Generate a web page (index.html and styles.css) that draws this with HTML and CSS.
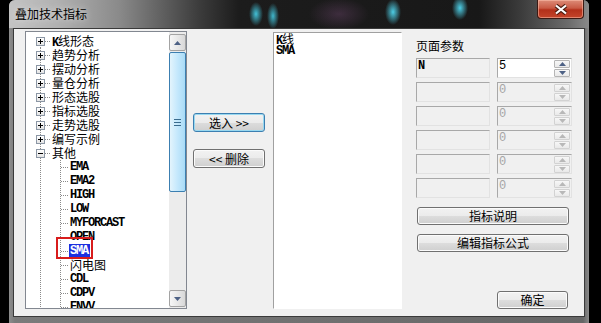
FILE: index.html
```html
<!DOCTYPE html>
<html lang="zh-CN">
<head>
    <meta charset="UTF-8">
    <title>叠加技术指标</title>
    <link rel="stylesheet" href="styles.css">
</head>
<body>
<div class="window">
    <div class="titlebar">
        <span class="title">叠加技术指标</span>
        <button class="close" type="button">
            <svg width="14" height="11" viewBox="0 0 14 11"><path d="M2 1.5 L12 9.5 M12 1.5 L2 9.5" stroke="#4a1c10" stroke-width="4.2"/><path d="M2 1.5 L12 9.5 M12 1.5 L2 9.5" stroke="#ffffff" stroke-width="2.2"/></svg>
        </button>
    </div>
    <div class="client">
        <div class="tree">
            <div class="tree-items">
                <div class="node root first"><span class="gutter"><i class="box plus"></i></span><span class="label"><span class="en">K</span>线形态</span></div>
                <div class="node root"><span class="gutter"><i class="box plus"></i></span><span class="label">趋势分析</span></div>
                <div class="node root"><span class="gutter"><i class="box plus"></i></span><span class="label">摆动分析</span></div>
                <div class="node root"><span class="gutter"><i class="box plus"></i></span><span class="label">量仓分析</span></div>
                <div class="node root"><span class="gutter"><i class="box plus"></i></span><span class="label">形态选股</span></div>
                <div class="node root"><span class="gutter"><i class="box plus"></i></span><span class="label">指标选股</span></div>
                <div class="node root"><span class="gutter"><i class="box plus"></i></span><span class="label">走势选股</span></div>
                <div class="node root"><span class="gutter"><i class="box plus"></i></span><span class="label">编写示例</span></div>
                <div class="node root"><span class="gutter"><i class="box minus"></i></span><span class="label">其他</span></div>
                <div class="node child"><span class="gutter"></span><span class="gutter2"></span><span class="label en">EMA</span></div>
                <div class="node child"><span class="gutter"></span><span class="gutter2"></span><span class="label en">EMA2</span></div>
                <div class="node child"><span class="gutter"></span><span class="gutter2"></span><span class="label en">HIGH</span></div>
                <div class="node child"><span class="gutter"></span><span class="gutter2"></span><span class="label en">LOW</span></div>
                <div class="node child"><span class="gutter"></span><span class="gutter2"></span><span class="label en">MYFORCAST</span></div>
                <div class="node child"><span class="gutter"></span><span class="gutter2"></span><span class="label en">OPEN</span></div>
                <div class="node child"><span class="gutter"></span><span class="gutter2"></span><span class="label en selected">SMA</span></div>
                <div class="node child"><span class="gutter"></span><span class="gutter2"></span><span class="label">闪电图</span></div>
                <div class="node child"><span class="gutter"></span><span class="gutter2"></span><span class="label en">CDL</span></div>
                <div class="node child"><span class="gutter"></span><span class="gutter2"></span><span class="label en">CDPV</span></div>
                <div class="node child"><span class="gutter"></span><span class="gutter2"></span><span class="label en">ENVV</span></div>
            </div>
            <div class="vscroll">
                <span class="sb-btn">
                    <svg width="7" height="4" viewBox="0 0 7 4"><path d="M0 4 L3.5 0 L7 4Z" fill="#4d6185"/></svg>
                </span>
                <span class="sb-thumb"></span>
                <span class="sb-track"></span>
                <span class="sb-btn">
                    <svg width="7" height="4" viewBox="0 0 7 4"><path d="M0 0 L3.5 4 L7 0Z" fill="#4d6185"/></svg>
                </span>
            </div>
            <div class="mark"></div>
        </div>

        <div class="mid">
            <button class="btn default" type="button">选入 &gt;&gt;</button>
            <button class="btn" type="button">&lt;&lt; 删除</button>
        </div>

        <div class="picked">
            <div class="picked-item"><span class="en">K</span>线</div>
            <div class="picked-item en">SMA</div>
        </div>

        <div class="params">
            <div class="params-title">页面参数</div>
            <div class="param-rows">
                <div class="param-row">
                    <div class="plabel en">N</div>
                    <div class="spin active">
                        <span class="val">5</span>
                        <span class="spin-btns">
                            <span class="sbtn"><svg width="7" height="4" viewBox="0 0 7 4"><path d="M0 4 L3.5 0 L7 4Z"/></svg></span>
                            <span class="sbtn"><svg width="7" height="4" viewBox="0 0 7 4"><path d="M0 0 L3.5 4 L7 0Z"/></svg></span>
                        </span>
                    </div>
                </div>
                <div class="param-row">
                    <div class="plabel"></div>
                    <div class="spin">
                        <span class="val">0</span>
                        <span class="spin-btns">
                            <span class="sbtn"><svg width="7" height="4" viewBox="0 0 7 4"><path d="M0 4 L3.5 0 L7 4Z"/></svg></span>
                            <span class="sbtn"><svg width="7" height="4" viewBox="0 0 7 4"><path d="M0 0 L3.5 4 L7 0Z"/></svg></span>
                        </span>
                    </div>
                </div>
                <div class="param-row">
                    <div class="plabel"></div>
                    <div class="spin">
                        <span class="val">0</span>
                        <span class="spin-btns">
                            <span class="sbtn"><svg width="7" height="4" viewBox="0 0 7 4"><path d="M0 4 L3.5 0 L7 4Z"/></svg></span>
                            <span class="sbtn"><svg width="7" height="4" viewBox="0 0 7 4"><path d="M0 0 L3.5 4 L7 0Z"/></svg></span>
                        </span>
                    </div>
                </div>
                <div class="param-row">
                    <div class="plabel"></div>
                    <div class="spin">
                        <span class="val">0</span>
                        <span class="spin-btns">
                            <span class="sbtn"><svg width="7" height="4" viewBox="0 0 7 4"><path d="M0 4 L3.5 0 L7 4Z"/></svg></span>
                            <span class="sbtn"><svg width="7" height="4" viewBox="0 0 7 4"><path d="M0 0 L3.5 4 L7 0Z"/></svg></span>
                        </span>
                    </div>
                </div>
                <div class="param-row">
                    <div class="plabel"></div>
                    <div class="spin">
                        <span class="val">0</span>
                        <span class="spin-btns">
                            <span class="sbtn"><svg width="7" height="4" viewBox="0 0 7 4"><path d="M0 4 L3.5 0 L7 4Z"/></svg></span>
                            <span class="sbtn"><svg width="7" height="4" viewBox="0 0 7 4"><path d="M0 0 L3.5 4 L7 0Z"/></svg></span>
                        </span>
                    </div>
                </div>
                <div class="param-row">
                    <div class="plabel"></div>
                    <div class="spin">
                        <span class="val">0</span>
                        <span class="spin-btns">
                            <span class="sbtn"><svg width="7" height="4" viewBox="0 0 7 4"><path d="M0 4 L3.5 0 L7 4Z"/></svg></span>
                            <span class="sbtn"><svg width="7" height="4" viewBox="0 0 7 4"><path d="M0 0 L3.5 4 L7 0Z"/></svg></span>
                        </span>
                    </div>
                </div>
            </div>
            <button class="btn wide" type="button">指标说明</button>
            <button class="btn wide" type="button">编辑指标公式</button>
            <button class="btn ok" type="button">确定</button>
        </div>
    </div>
</div>
</body>
</html>
```

FILE: styles.css
```css
body {
    margin: 0;
    background: #000000;
    font-family: "Noto Sans CJK SC", sans-serif;
    font-size: 12px;
    color: #000000;
    overflow: hidden;
}
.en {
    font-family: "Liberation Mono", monospace;
    font-weight: bold;
    font-size: 12px;
    letter-spacing: -1.2px;
}
.window {
    margin-left: 9px;
    width: 580px;
    height: 323px;
    display: flex;
    flex-direction: column;
    border-radius: 6px 6px 0 0;
    background: linear-gradient(to right, #8d8d8d 0, #7b7b7b 6px, #666666 574px, #8a8a8a 580px);
}
.titlebar {
    height: 28px;
    display: flex;
    align-items: flex-start;
    border-radius: 6px 6px 0 0;
    background:
        radial-gradient(ellipse 7px 12px at 247px 14px, rgba(70, 210, 235, 0.9), rgba(70, 210, 235, 0) 100%),
        radial-gradient(ellipse 6px 13px at 264px 16px, rgba(70, 210, 235, 0.85), rgba(70, 210, 235, 0) 100%),
        radial-gradient(ellipse 8px 13px at 384px 12px, rgba(80, 215, 240, 0.95), rgba(80, 215, 240, 0) 100%),
        radial-gradient(ellipse 8px 12px at 451px 8px, rgba(80, 215, 240, 0.95), rgba(80, 215, 240, 0) 100%),
        radial-gradient(ellipse 30px 16px at 330px 14px, rgba(90, 60, 90, 0.55), rgba(90, 60, 90, 0) 100%),
        linear-gradient(to right, #c4c4c4 0, #b0b0b0 50px, #8a8a8a 110px, #3c3c3c 190px, #1c1c1c 230px, #181818 470px, #3a3a3a 510px, #6c6c6c 560px, #8a8a8a 580px);
}
.title {
    margin: 7px 0 0 6px;
    line-height: 14px;
    font-size: 12px;
    color: #000000;
    text-shadow: 0 0 6px #e6e6e6;
}
.close {
    margin: 0 5px 0 auto;
    width: 47px;
    height: 19px;
    padding: 0;
    display: flex;
    align-items: center;
    justify-content: center;
    border: 1px solid #3b1a14;
    border-top: none;
    border-radius: 0 0 4px 4px;
    background: linear-gradient(#dd8c78 0, #c85a44 45%, #b3301a 55%, #c4442a 100%);
    box-shadow: inset 0 0 0 1px rgba(255, 200, 180, 0.5);
}
.client {
    margin: 0 4px 0 4px;
    height: 289px;
    box-sizing: border-box;
    border: 1px solid #3a3a3a;
    background: #f0f0f0;
    display: flex;
    align-items: flex-start;
    padding: 2px 0 0 11px;
}

/* tree */
.tree {
    position: relative;
    width: 162px;
    height: 278px;
    box-sizing: border-box;
    border: 1px solid #828790;
    background: #ffffff;
    display: flex;
    overflow: hidden;
}
.tree-items {
    flex: 1;
    padding-top: 2px;
    overflow: hidden;
}
.node {
    display: flex;
    height: 14px;
    line-height: 14px;
    white-space: nowrap;
}
.gutter {
    width: 24px;
    height: 14px;
    flex: none;
    box-sizing: border-box;
    padding-left: 10px;
    display: flex;
    align-items: center;
    background:
        repeating-linear-gradient(to bottom, #8a8a8a 0 1px, transparent 1px 2px) 14px 0 / 1px 100% no-repeat;
}
.root .gutter {
    background:
        repeating-linear-gradient(to right, #8a8a8a 0 1px, transparent 1px 2px) 19px 7px / 5px 1px no-repeat,
        repeating-linear-gradient(to bottom, #8a8a8a 0 1px, transparent 1px 2px) 14px 0 / 1px 100% no-repeat;
}
.root.first .gutter {
    background:
        repeating-linear-gradient(to right, #8a8a8a 0 1px, transparent 1px 2px) 19px 7px / 5px 1px no-repeat,
        repeating-linear-gradient(to bottom, #8a8a8a 0 1px, transparent 1px 2px) 14px 7px / 1px 100% no-repeat;
}
.gutter2 {
    width: 20px;
    height: 14px;
    flex: none;
    background:
        repeating-linear-gradient(to right, #8a8a8a 0 1px, transparent 1px 2px) 11px 7px / 8px 1px no-repeat,
        repeating-linear-gradient(to bottom, #8a8a8a 0 1px, transparent 1px 2px) 10px 0 / 1px 100% no-repeat;
}
.box {
    width: 9px;
    height: 9px;
    box-sizing: border-box;
    border: 1px solid #8c97a5;
    background: #ffffff;
}
.box.plus {
    background:
        linear-gradient(#000, #000) center / 5px 1px no-repeat,
        linear-gradient(#000, #000) center / 1px 5px no-repeat,
        linear-gradient(#ffffff, #e4e4e4);
}
.box.minus {
    background:
        linear-gradient(#000, #000) center / 5px 1px no-repeat,
        linear-gradient(#ffffff, #e4e4e4);
}
.root .label {
    margin-left: 2px;
}
.label.selected {
    background: #1c30e0;
    color: #ffffff;
    padding: 0 2px 0 1px;
    margin-left: -1px;
}
.mark {
    position: absolute;
    left: 30px;
    top: 205px;
    width: 37px;
    height: 22px;
    box-sizing: border-box;
    border: 2px solid #d81c1c;
}

/* tree scrollbar */
.vscroll {
    width: 17px;
    flex: none;
    display: flex;
    flex-direction: column;
    padding: 2px 0 1px;
    box-sizing: border-box;
    background: #ececec;
}
.sb-btn {
    height: 17px;
    flex: none;
    box-sizing: border-box;
    border: 1px solid #a3a3a3;
    border-radius: 2px;
    background: linear-gradient(to right, #f6f6f6, #e8e8e8 50%, #d8d8d8);
    display: flex;
    align-items: center;
    justify-content: center;
}
.sb-thumb {
    margin-top: 1px;
    height: 140px;
    flex: none;
    box-sizing: border-box;
    border: 1px solid #3c7fb1;
    border-radius: 2px;
    background:
        linear-gradient(#3b6c8e, #3b6c8e) center calc(50% - 3px) / 7px 1px no-repeat,
        linear-gradient(#3b6c8e, #3b6c8e) center / 7px 1px no-repeat,
        linear-gradient(#3b6c8e, #3b6c8e) center calc(50% + 3px) / 7px 1px no-repeat,
        linear-gradient(to right, #e3f4fc, #c4e8fc 50%, #a9dbf6);
}
.sb-track {
    flex: 1;
}

/* buttons */
.btn {
    height: 19px;
    padding: 0;
    box-sizing: border-box;
    border: 1px solid #707070;
    border-radius: 3px;
    background: linear-gradient(#f2f2f2 0, #ebebeb 50%, #dddddd 50%, #cfcfcf 100%);
    box-shadow: inset 0 0 0 1px #fbfbfb;
    font-family: "Noto Sans CJK SC", sans-serif;
    font-size: 12px;
    line-height: 16px;
    color: #000000;
}
.btn.default {
    border-color: #3c7fb1;
    box-shadow: inset 0 0 0 1px #98d8f0;
}
.mid {
    width: 72px;
    margin-left: 6px;
    padding-top: 82px;
    display: flex;
    flex-direction: column;
    gap: 17px;
}

/* selected list */
.picked {
    width: 129px;
    height: 277px;
    margin: 1px 0 0 8px;
    box-sizing: border-box;
    border: 1px solid;
    border-color: #a0a0a0 #ffffff #ffffff #a0a0a0;
    background: #ffffff;
    padding: 0 0 0 2px;
}
.picked-item {
    height: 12px;
    line-height: 12px;
}

/* parameters */
.params {
    width: 156px;
    margin-left: 14px;
    padding-top: 9px;
    display: flex;
    flex-direction: column;
}
.params-title {
    line-height: 12px;
    margin-bottom: 6px;
}
.param-rows {
    display: flex;
    flex-direction: column;
    gap: 4px;
}
.param-row {
    display: flex;
    gap: 7px;
}
.plabel {
    width: 74px;
    height: 20px;
    box-sizing: border-box;
    border: 1px solid;
    border-color: #a8a8a8 #e2e2e2 #e2e2e2 #a8a8a8;
    padding-left: 1px;
    line-height: 14px;
}
.spin {
    width: 75px;
    height: 20px;
    box-sizing: border-box;
    border: 1px solid;
    border-color: #a8a8a8 #e2e2e2 #e2e2e2 #a8a8a8;
    display: flex;
    padding: 0 1px 0 0;
}
.spin.active {
    background: #ffffff;
}
.val {
    flex: 1;
    padding-left: 1px;
    line-height: 14px;
    font-family: "Liberation Mono", monospace;
    font-size: 12px;
    color: #a6a6a6;
}
.spin.active .val {
    color: #000000;
}
.spin-btns {
    width: 16px;
    display: flex;
    flex-direction: column;
    justify-content: center;
    gap: 1px;
}
.sbtn {
    height: 8px;
    box-sizing: border-box;
    border: 1px solid #d2d2d2;
    border-radius: 1px;
    background: linear-gradient(#f7f7f7, #e9e9e9);
    display: flex;
    align-items: center;
    justify-content: center;
}
.sbtn svg {
    fill: #b8b8b8;
}
.spin.active .sbtn {
    border-color: #b5b5b5;
}
.spin.active .sbtn svg {
    fill: #4d6185;
}
.btn.wide {
    margin-left: 1px;
    width: 152px;
    height: 18px;
    margin-top: 9px;
}
.btn.ok {
    margin: 39px 0 0 81px;
    width: 71px;
    height: 18px;
}
```
